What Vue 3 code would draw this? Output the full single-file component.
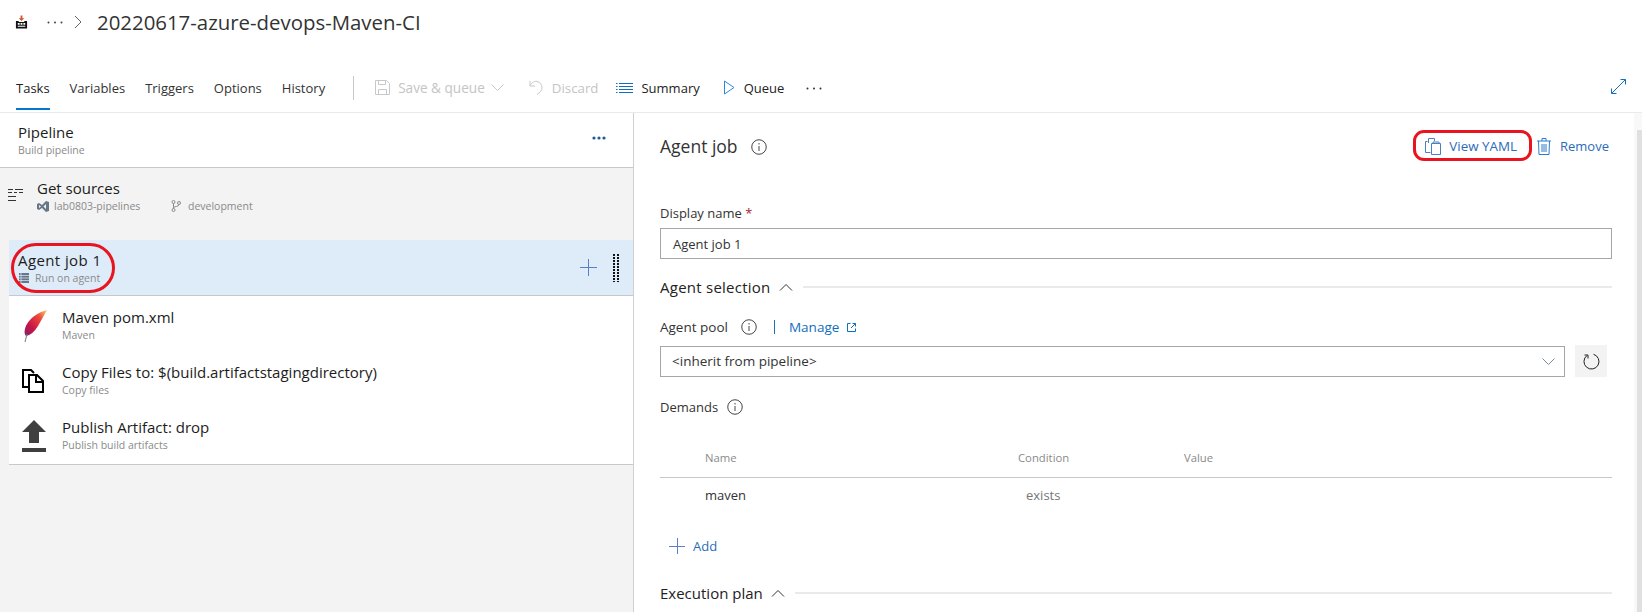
<template>
  <div class="page">
    <header class="topbar">
      <div class="crumbs">
        <svg class="logo" width="13" height="14" viewBox="0 0 14 14">
          <path d="M6 0h2v3h2L7 6 4 3h2z" fill="#d9542b" />
          <path d="M1 6h3v1h6V6h3v8H1z" fill="#111" />
          <path d="M3 8h2v2H3zM6 8h2v2H6zM9 8h2v2H9zM3 11h8v1H3z" fill="#fff" />
        </svg>
        <svg class="crumb-dots" width="16" height="3" viewBox="0 0 16 3" fill="#444"><circle cx="1.500" cy="1.500" r="1" /><circle cx="8" cy="1.500" r="1" /><circle cx="14.500" cy="1.500" r="1" /></svg>
        <svg width="8" height="14" viewBox="0 0 8 14"><path d="M1 1l6 6-6 6" fill="none" stroke="#666" /></svg>
        <h1 class="title">20220617-azure-devops-Maven-CI</h1>
      </div>
      <nav class="toolbar">
        <a v-for="t in tabs" :key="t" class="tab" :class="{ active: t === 'Tasks' }">{{ t }}</a>
        <span class="sep"></span>
        <span class="tool disabled save">
          <svg width="15" height="15" viewBox="0 0 15 15" fill="none" stroke="#c8c8c8"><path d="M.5.5h11l3 3v11H.5zM3.5.5v4h7v-4M3.5 14.5v-5h8v5" /></svg>
          Save &amp; queue
          <svg class="save-chev" width="13" height="7" viewBox="0 0 13 7"><path d="M.5.5l6 6 6-6" fill="none" stroke="#c8c8c8" /></svg>
        </span>
        <span class="tool disabled discard">
          <svg width="14" height="16" viewBox="0 0 14 16" fill="none" stroke="#c8c8c8"><path d="M1 1v5h5M1 5.500C3 2 6 1 8 1.500c3 .8 5 3 5 6 0 3-2 5-5 7" /></svg>
          Discard
        </span>
        <span class="tool summary">
          <svg width="17" height="12" viewBox="0 0 17 12" stroke="#106ebe"><path d="M3 1.500h14M3 4.500h14M3 7.500h14M3 10.500h14M0 1.500h1.500M0 4.500h1.500M0 7.500h1.500M0 10.500h1.500" /></svg>
          Summary
        </span>
        <span class="tool queue">
          <svg width="11" height="15" viewBox="0 0 11 15"><path d="M.5 1l9.500 6.500L.5 14z" fill="none" stroke="#2b88d8" /></svg>
          Queue
        </span>
        <svg class="tool-more" width="16" height="3" viewBox="0 0 16 3" fill="#333"><circle cx="1.500" cy="1.500" r="1" /><circle cx="8" cy="1.500" r="1" /><circle cx="14.500" cy="1.500" r="1" /></svg>
        <svg class="expand" width="15" height="15" viewBox="0 0 15 15" fill="none" stroke="#106ebe"><path d="M.8 14.200L14.200.8M9.500.5h5v5M.5 9.500v5h5" /></svg>
      </nav>
    </header>

    <main class="main">
      <aside class="left">
        <section class="pipe-head">
          <div>
            <div class="name">Pipeline</div>
            <div class="sub">Build pipeline</div>
          </div>
          <svg class="pipe-more" width="14" height="4" viewBox="0 0 14 4" fill="#1d5a9a"><circle cx="2" cy="2" r="1.600" /><circle cx="7" cy="2" r="1.600" /><circle cx="12" cy="2" r="1.600" /></svg>
        </section>

        <section class="sources">
          <svg class="sources-icon" width="15" height="14" viewBox="0 0 15 14" stroke="#333"><path d="M0 1.500h5M7 1.500h8M0 4.500h4M6 4.500h3M11 4.500h4M0 8.500h8M0 12.500h8" /></svg>
          <div>
            <div class="name">Get sources</div>
            <div class="sub sources-sub">
              <svg width="12" height="11" viewBox="0 0 12 11"><path d="M0 3l2-1 3 2 4-4 3 1v9l-3 1-4-4-3 2-2-1zM2 4v3l2-1.500zM9 3L6.500 5.500 9 8z" fill="#68768a" fill-rule="evenodd" /></svg>
              <span class="repo">lab0803-pipelines</span>
              <svg class="branch" width="10" height="12" viewBox="0 0 10 12" fill="none" stroke="#8a8a8a"><circle cx="2.500" cy="2" r="1.500" /><circle cx="2.500" cy="10" r="1.500" /><circle cx="8" cy="3" r="1.500" /><path d="M2.500 3.500v5M8 4.500C8 7 3 6 2.500 8" /></svg>
              <span>development</span>
            </div>
          </div>
        </section>

        <section class="job">
          <div>
            <div class="name">Agent job 1</div>
            <div class="sub job-sub">
              <svg width="10" height="10" viewBox="0 0 10 10"><path d="M0 0h10v10H0z" fill="#68768a" /><path d="M0 2.500h10M0 5h10M0 7.500h10M2 0v10" stroke="#deecf9" stroke-width=".7" /></svg>
              Run on agent
            </div>
          </div>
          <div class="job-actions">
            <svg width="17" height="17" viewBox="0 0 17 17" stroke="#5c7fc9"><path d="M0 8.500h17M8.500 0v17" /></svg>
            <svg width="6" height="28" viewBox="0 0 6 28">
              <pattern id="grip" width="4" height="3" patternUnits="userSpaceOnUse"><rect width="2" height="2" fill="#111" /></pattern>
              <rect width="6" height="28" fill="url(#grip)" />
            </svg>
          </div>
          <span class="mark mark-job"></span>
        </section>

        <ul class="tasks">
          <li v-for="t in tasks" :key="t.name" class="task">
            <svg v-if="t.icon === 'maven'" width="26" height="34" viewBox="0 0 26 34">
              <defs>
                <linearGradient id="feather" x1="1" y1="0" x2="0" y2="1">
                  <stop offset="0" stop-color="#f5d76e" />
                  <stop offset=".3" stop-color="#ef4b3a" />
                  <stop offset=".7" stop-color="#c5124a" />
                  <stop offset="1" stop-color="#7a2a6a" />
                </linearGradient>
              </defs>
              <path d="M25 1C17 3 9 8 5 15 2 20 2 25 4 27 9 26 13 22 16 17 19 12 22 6 25 1z" fill="url(#feather)" />
              <path d="M3 33L5 25" stroke="#777" fill="none" />
            </svg>
            <svg v-else-if="t.icon === 'copy'" width="22" height="24" viewBox="0 0 22 24" fill="none" stroke="#000" stroke-width="2">
              <path d="M8 18H1V1h8l3 3M7 6h8l6 6v11H7zM14 6v7h7" />
            </svg>
            <svg v-else width="24" height="32" viewBox="0 0 24 32" fill="#3f3f3f">
              <path d="M12 0l12 12h-7v11H7V12H0zM0 28h24v4H0z" />
            </svg>
            <div>
              <div class="name">{{ t.name }}</div>
              <div class="sub">{{ t.sub }}</div>
            </div>
          </li>
        </ul>
      </aside>

      <section class="right">
        <div class="job-head">
          <h2 class="job-title">Agent job</h2>
          <svg class="info info-big" viewBox="0 0 16 16" width="16" height="16"><circle cx="8" cy="8" r="7.250" /><path d="M8 7v5M8 4v1.500" /></svg>
          <div class="job-links">
            <a class="link view-yaml">
              <svg width="16" height="17" viewBox="0 0 16 17" fill="none" stroke="#4a7fc0"><path d="M5.500 14.500h-5v-11h2M3.500 5V.5h6V3M6.500 5.500h9v11h-9zM8 5.500V4h6v1.500" /></svg>
              View YAML
              <span class="mark mark-yaml"></span>
            </a>
            <a class="link remove">
              <svg width="14" height="17" viewBox="0 0 14 17" fill="none" stroke="#2b7cc9"><path d="M0 3h14M5 3V.5h4V3M1.500 3l.5 13.500h10L12.500 3M5 6v8M7 6v8M9 6v8" /></svg>
              Remove
            </a>
          </div>
        </div>

        <label class="label display-label">Display name <span class="req">*</span></label>
        <div class="field">Agent job 1</div>

        <div class="group-head selection-head">
          <span class="group-title">Agent selection</span>
          <svg width="14" height="8" viewBox="0 0 14 8"><path d="M1 7.500l6-6 6 6" fill="none" stroke="#333" /></svg>
          <span class="group-line"></span>
        </div>

        <div class="label pool-label">
          Agent pool
          <svg class="info" viewBox="0 0 16 16" width="16" height="16"><circle cx="8" cy="8" r="7.250" /><path d="M8 7v5M8 4v1.500" /></svg>
          <span class="pool-bar"></span>
          <a class="manage">Manage</a>
          <svg width="9" height="9" viewBox="0 0 9 9" fill="none" stroke="#106ebe"><path d="M3.500.5h-3v8h8v-3M4 5L8.500.5M5.500.5h3v3" /></svg>
        </div>
        <div class="pool-row">
          <div class="field select">
            <span>&lt;inherit from pipeline&gt;</span>
            <svg width="13" height="7" viewBox="0 0 13 7"><path d="M.5.500l6 6 6-6" fill="none" stroke="#7b8a9c" /></svg>
          </div>
          <button class="refresh">
            <svg width="17" height="17" viewBox="0 0 17 17" fill="none" stroke="#222"><path d="M10.500 1.300a7.500 7.500 0 1 1-6.500 1.200M1.500 2h3.500v3.500" /></svg>
          </button>
        </div>

        <div class="label demands-label">
          Demands
          <svg class="info" viewBox="0 0 16 16" width="16" height="16"><circle cx="8" cy="8" r="7.250" /><path d="M8 7v5M8 4v1.500" /></svg>
        </div>

        <div class="grid grid-head">
          <span>Name</span>
          <span>Condition</span>
          <span>Value</span>
        </div>
        <div class="grid grid-row">
          <span class="demand">maven</span>
          <span class="exists">exists</span>
          <span></span>
        </div>

        <a class="link add">
          <svg width="16" height="16" viewBox="0 0 16 16" stroke="#5c7fc9"><path d="M0 8.500h16M8.500 0v16" /></svg>
          Add
        </a>

        <div class="group-head plan-head">
          <span class="group-title">Execution plan</span>
          <svg width="14" height="8" viewBox="0 0 14 8"><path d="M1 7.500l6-6 6 6" fill="none" stroke="#333" /></svg>
          <span class="group-line"></span>
        </div>
      </section>

      <div class="scrollbar"><span class="thumb"></span></div>
    </main>
  </div>
</template>

<script setup>
const tabs = ['Tasks', 'Variables', 'Triggers', 'Options', 'History']

const tasks = [
  { name: 'Maven pom.xml', sub: 'Maven', icon: 'maven' },
  { name: 'Copy Files to: $(build.artifactstagingdirectory)', sub: 'Copy files', icon: 'copy' },
  { name: 'Publish Artifact: drop', sub: 'Publish build artifacts', icon: 'publish' },
]
</script>

<style>
html,
body {
  margin: 0;
  background: #fff;
}
</style>

<style scoped>
.page {
  width: 1642px;
  height: 612px;
  overflow: hidden;
  display: flex;
  flex-direction: column;
  font-family: "Open Sans", "Noto Sans", sans-serif;
  font-size: 13px;
  color: #222;
}

.topbar {
  height: 112px;
  flex: none;
  border-bottom: 1px solid #eaeaea;
  box-sizing: content-box;
}

.crumbs {
  height: 44px;
  display: flex;
  align-items: center;
  padding-left: 15px;
}

.crumb-dots {
  margin: 0 11px 0 19px;
}

.title {
  margin: 0 0 0 15px;
  font-size: 20.400px;
  font-weight: 400;
  color: #333;
}

.toolbar {
  height: 68px;
  display: flex;
  align-items: center;
  padding-top: 22px;
  box-sizing: border-box;
  position: relative;
  padding-left: 16px;
}

.tab {
  margin-right: 20px;
  line-height: 44px;
  height: 44px;
  margin-top: -2px;
  color: #333;
  white-space: nowrap;
  box-sizing: border-box;
}

.tab.active {
  border-bottom: 2px solid #0078d4;
  color: #222;
}

.sep {
  width: 1px;
  height: 24px;
  background: #c8c8c8;
  margin-left: 8px;
  margin-top: -3px;
}

.tool {
  display: flex;
  align-items: center;
  gap: 8px;
  white-space: nowrap;
  margin-top: -3px;
}

.tool.disabled {
  color: #c4c4c4;
}

.save {
  margin-left: 21px;
  font-size: 13.600px;
}

.save-chev {
  margin-left: -2px;
}

.discard {
  margin-left: 25px;
  gap: 9px;
  font-size: 13.300px;
}

.summary {
  margin-left: 18px;
  gap: 8px;
}

.queue {
  margin-left: 24px;
  gap: 9px;
}

.tool-more {
  margin-left: 22px;
  margin-top: -1px;
}

.expand {
  margin-left: auto;
  margin-right: 16px;
  margin-top: -5px;
}

.main {
  flex: 1;
  display: flex;
  min-height: 0;
}

.left {
  width: 634px;
  flex: none;
  box-sizing: border-box;
  background: #f3f3f3;
  border-right: 1px solid #d0d0d0;
}

.name {
  font-size: 15px;
  line-height: 19px;
  color: #1c1c1c;
  white-space: nowrap;
}

.sub {
  font-size: 10.500px;
  line-height: 14px;
  color: #8a8a8a;
  white-space: nowrap;
}

.pipe-head {
  height: 54px;
  background: #fff;
  border-bottom: 1px solid #c8c8c8;
  display: flex;
  justify-content: space-between;
  align-items: center;
  padding: 0 27px 0 18px;
}

.pipe-head .sub {
  margin-top: 1px;
}

.pipe-more {
  margin-top: -4px;
}

.sources {
  height: 72px;
  display: flex;
  padding: 11px 0 0 8px;
  box-sizing: border-box;
}

.sources-icon {
  margin: 9px 14px 0 0;
}

.sources-sub {
  display: flex;
  align-items: center;
  margin-top: 1px;
}

.repo {
  margin-left: 5px;
  width: 117px;
}

.branch {
  margin-right: 7px;
}

.job {
  height: 56px;
  margin-left: 9px;
  background: #deecf9;
  border-bottom: 1px solid #c8c8c8;
  display: flex;
  justify-content: space-between;
  align-items: center;
  padding: 0 14px 0 9px;
  position: relative;
  box-sizing: border-box;
}

.job .name {
  letter-spacing: .4px;
}

.job-sub {
  display: flex;
  align-items: center;
  gap: 6px;
  padding-left: 1px;
  margin-top: 1px;
}

.job-actions {
  display: flex;
  align-items: center;
  gap: 16px;
}

.mark {
  position: absolute;
  border: 3px solid #e8141f;
  pointer-events: none;
  box-sizing: border-box;
}

.mark-job {
  left: 2px;
  top: 3px;
  width: 104px;
  height: 50px;
  border-radius: 26px;
}

.tasks {
  list-style: none;
  margin: 0 0 0 9px;
  padding: 2px 0 0;
  height: 169px;
  box-sizing: border-box;
  background: #fff;
  border-bottom: 1px solid #c8c8c8;
}

.task {
  height: 55px;
  display: flex;
  align-items: center;
  position: relative;
}

.task svg {
  position: absolute;
  left: 13px;
}

.task > div {
  margin-left: 53px;
  padding-bottom: 1px;
}

.task .name {
  margin-bottom: 1px;
}

.right {
  flex: 1;
  min-width: 0;
  padding: 0 22px 0 26px;
  box-sizing: border-box;
}

.job-head {
  display: flex;
  align-items: center;
  height: 66px;
  padding-bottom: 15px;
}

.job-title {
  margin: 0;
  font-size: 17.500px;
  font-weight: 400;
  color: #333;
}

.info {
  fill: none;
  stroke: #444;
  stroke-width: 1;
}

.info-big {
  margin-left: 13px;
  margin-top: 2px;
}

.job-links {
  margin-left: auto;
  margin-right: 3px;
  display: flex;
  align-items: center;
  gap: 20px;
}

.link {
  display: flex;
  align-items: center;
  gap: 8px;
  color: #2b6cb8;
  position: relative;
}

.view-yaml {
  font-size: 13.400px;
}

.remove {
  gap: 9px;
}

.mark-yaml {
  left: -12px;
  top: -7px;
  width: 119px;
  height: 31px;
  border-radius: 11px;
}

.label {
  color: #333;
  display: flex;
  align-items: center;
}

.display-label {
  display: block;
  margin-top: 9px;
  line-height: 20px;
}

.req {
  color: #a4262c;
}

.field {
  height: 31px;
  border: 1px solid #a6a6a6;
  box-sizing: border-box;
  display: flex;
  align-items: center;
  padding: 0 12px;
  margin-top: 5px;
  color: #333;
}

.group-head {
  display: flex;
  align-items: center;
  gap: 8px;
  font-size: 15px;
  line-height: 20px;
}

.selection-head {
  margin-top: 18px;
}

.selection-head .group-title {
  letter-spacing: .25px;
}

.group-line {
  flex: 1;
  height: 2px;
  background: #eaeaea;
  margin-left: 2px;
}

.pool-label {
  margin-top: 20px;
  line-height: 20px;
  font-size: 13.500px;
}

.pool-label .info {
  margin-left: 13px;
}

.pool-bar {
  width: 1px;
  height: 14px;
  background: #1f6fb5;
  margin: 0 14px 0 17px;
}

.manage {
  color: #106ebe;
  margin-right: 8px;
}

.pool-row {
  display: flex;
  align-items: center;
  gap: 10px;
  margin: 8px 5px 0 0;
}

.select {
  flex: 1;
  margin-top: 0;
  justify-content: space-between;
  padding: 0 9px 0 11px;
  font-size: 13.500px;
}

.refresh {
  width: 32px;
  height: 32px;
  border: none;
  background: #f3f3f3;
  padding: 0;
  display: flex;
  align-items: center;
  justify-content: center;
}

.demands-label {
  margin-top: 20px;
  line-height: 20px;
  gap: 9px;
}

.grid {
  display: grid;
  grid-template-columns: 313px 166px 1fr;
  padding-left: 45px;
}

.grid-head {
  margin-top: 31px;
  font-size: 11.300px;
  color: #8a8a8a;
  border-bottom: 1px solid #c8c8c8;
  padding-bottom: 9px;
  height: 20px;
  line-height: 20px;
}

.grid-row {
  line-height: 20px;
  margin-top: 7px;
}

.demand {
  color: #333;
}

.exists {
  color: #777;
  padding-left: 8px;
}

.add {
  margin: 31px 0 0 9px;
  line-height: 20px;
  color: #2b6cb8;
}

.plan-head {
  margin-top: 27px;
}

.scrollbar {
  width: 8px;
  flex: none;
  background: #f8f8f8;
  display: flex;
  justify-content: flex-end;
  padding-top: 17px;
  box-sizing: border-box;
}

.thumb {
  width: 5px;
  height: 100%;
  background: #e0e0e0;
}
</style>
